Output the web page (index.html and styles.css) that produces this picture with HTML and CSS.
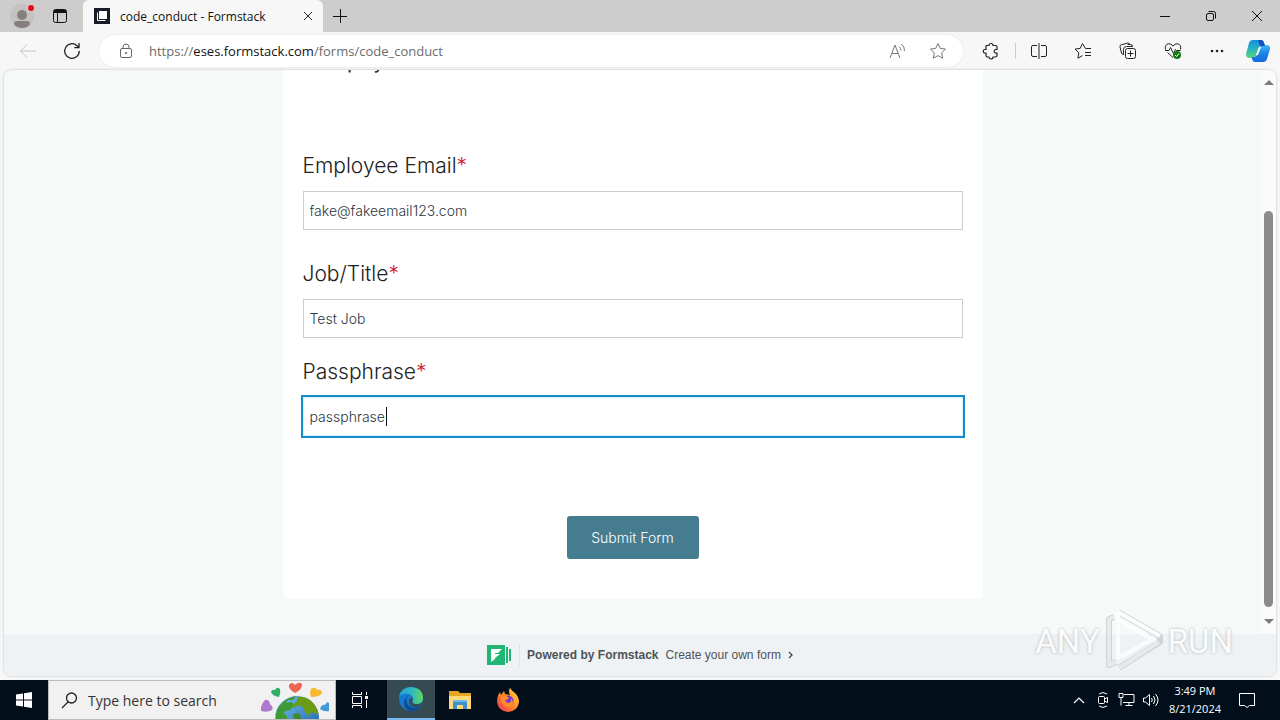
FILE: index.html
```html
<!DOCTYPE html>
<html lang="en">
<head>
<meta charset="utf-8">
<title>code_conduct - Formstack</title>
<link rel="stylesheet" href="styles.css">
</head>
<body>
<div class="desktop">
  <header class="titlebar">
    <div class="title-tools">
      <button class="icon-btn" aria-label="Profile">
        <svg width="26" height="28" viewBox="0 0 26 28"><circle cx="13" cy="14" r="12" fill="#c4c1c0"/><circle cx="13" cy="13" r="5" fill="#85807e"/><path d="M5 22q0-3 3-3h10q3 0 3 3-2 4-8 4t-8-4z" fill="#85807e"/><circle cx="22" cy="6" r="4" fill="#dcc"/><circle cx="22" cy="6" r="3" fill="#e00b1c"/></svg>
      </button>
      <button class="icon-btn" aria-label="Tab actions">
        <svg width="16" height="16" viewBox="0 0 16 16" fill="none" stroke="#111"><rect x="1.5" y="1.5" width="13" height="13" rx="2"/><path d="M2 3.5h12" stroke-width="3"/><path d="M5.5 4v10"/></svg>
      </button>
    </div>
    <div class="tab">
      <svg width="16" height="16" viewBox="0 0 16 16"><path fill="#171c26" d="M0 0h16v16H0z"/><path fill="#fff" d="M5 3h8v8H5z"/><path d="M3.500 4.500v8h8" stroke="#fff" fill="none"/></svg>
      <span class="tab-title">code_conduct - Formstack</span>
      <button class="icon-btn" aria-label="Close tab"><svg width="10" height="10" viewBox="0 0 10 10" stroke="#222" fill="none"><path d="M1 1l8 8M9 1l-8 8"/></svg></button>
    </div>
    <button class="icon-btn new-tab" aria-label="New tab"><svg width="14" height="14" viewBox="0 0 14 14" stroke="#111" fill="none"><path d="M7.500 0v14M0 7.500h14"/></svg></button>
    <div class="window-buttons">
      <button class="icon-btn" aria-label="Minimize"><svg width="12" height="12" viewBox="0 0 12 12" stroke="#111"><path d="M1 6.500h10"/></svg></button>
      <button class="icon-btn" aria-label="Restore"><svg width="12" height="12" viewBox="0 0 12 12" stroke="#111" fill="none"><rect x="1.500" y="3.500" width="7" height="7" rx="1.500"/><path d="M3.500 1.500h5q2 0 2 2v5"/></svg></button>
      <button class="icon-btn" aria-label="Close"><svg width="12" height="12" viewBox="0 0 12 12" stroke="#111"><path d="M1 1l10 10M11 1L1 11"/></svg></button>
    </div>
  </header>

  <nav class="toolbar">
    <div class="nav-tools">
      <button class="icon-btn" aria-label="Back"><svg width="18" height="16" viewBox="0 0 18 16" stroke="#c6c6c6" fill="none"><path d="M1.500 8H17M8 1.500L1.500 8 8 14.500"/></svg></button>
      <button class="icon-btn" aria-label="Refresh"><svg width="18" height="18" viewBox="0 0 18 18" stroke="#222" stroke-width="1.300" fill="none"><path d="M16.300 9A7.300 7.300 0 1 1 14 3.700L16 5.500M16 1v4.700h-4.700"/></svg></button>
    </div>
    <div class="address">
      <svg width="14" height="16" viewBox="0 0 14 16" stroke="#666" fill="none"><rect x="1.500" y="5.500" width="11" height="9" rx="1.500"/><path d="M4 5.500V4q0-3 3-3t3 3v1.500"/><circle cx="7" cy="10" r=".7" fill="#666"/></svg>
      <span class="url">https://<b>eses.formstack.com</b>/forms/code_conduct</span>
      <button class="icon-btn" aria-label="Read aloud"><svg width="18" height="16" viewBox="0 0 18 16" stroke="#777" fill="none"><path d="M1 15L6 2l5 13M3 10.500h6M10 3.500q2 1.500 2 4M12 1q4 2.500 3.500 7"/></svg></button>
      <button class="icon-btn" aria-label="Favorite"><svg width="18" height="18" viewBox="0 0 18 18" stroke="#777" fill="none"><path d="M9 1.500l2.300 4.900 5.200.7-3.800 3.700.9 5.400L9 13.600l-4.600 2.600.9-5.400L1.500 7.100l5.200-.7z" stroke-linejoin="round"/></svg></button>
    </div>
    <div class="browser-tools">
      <button class="icon-btn" aria-label="Extensions"><svg width="18" height="18" viewBox="0 0 18 18" stroke="#222" stroke-width="1.200" fill="none"><path d="M4.500 3.500H7a2 2 0 0 1 4 0h2.500q1.500 0 1.500 1.500v2.500h-1a1.800 1.800 0 0 0 0 3.600h1v2.400q0 1.500-1.500 1.500H11a2 2 0 0 1-4 0H5.500Q4 15 4 13.500v-2.400H3a1.800 1.800 0 0 1 0-3.600h1V4q0-.5.500-.5z" stroke-linejoin="round"/></svg></button>
      <span class="divider"></span>
      <button class="icon-btn" aria-label="Split screen"><svg width="16" height="16" viewBox="0 0 16 16" stroke="#222" fill="none"><path d="M6 2.500H2q-1.500 0-1.500 1.500v8q0 1.500 1.500 1.500h4M10 2.500h4q1.500 0 1.500 1.500v8q0 1.500-1.500 1.500h-4M8 0v16"/></svg></button>
      <button class="icon-btn" aria-label="Favorites list"><svg width="18" height="18" viewBox="0 0 18 18" stroke="#222" fill="none"><path d="M17 6.500h-5.500L8.500 1.500 6.200 6.400 1 7.100l3.800 3.700-.9 5.400 4.600-2.600M11 10.500h6M11 13.500h6" stroke-linejoin="round"/></svg></button>
      <button class="icon-btn" aria-label="Collections"><svg width="18" height="18" viewBox="0 0 18 18" stroke="#222" fill="none"><rect x="6.500" y="6.500" width="10" height="10" rx="2"/><path d="M11.500 8.500v6M8.500 11.500h6M4.500 12.500q-1.500 0-2-1.500l-1.500-6q-.3-1.700 1.200-2.200l6.500-1.700q1.500-.3 2 1.200M4.500 12.500v-5q0-3 3-3h6q0-2-2-2h-3"/></svg></button>
      <button class="icon-btn" aria-label="Browser essentials"><svg width="18" height="18" viewBox="0 0 18 18" stroke="#222" fill="none"><path d="M1.500 7.500q-1-5 3-5.800Q7 1.500 9 4q2-2.500 4.500-2.300 4 .8 3 5.800M3.500 10.500L9 15.500M1 8.500h4l1.500-3 3 6 2-4 1 1h4"/><circle cx="13" cy="13" r="4" fill="#107c10" stroke="none"/><path d="M11 13l1.500 1.500 2.500-3" stroke="#fff"/></svg></button>
      <button class="icon-btn" aria-label="More"><svg width="16" height="4" viewBox="0 0 16 4" fill="#222"><circle cx="3" cy="2" r="1.300"/><circle cx="8" cy="2" r="1.300"/><circle cx="13" cy="2" r="1.300"/></svg></button>
      <button class="icon-btn copilot" aria-label="Copilot"><svg width="24" height="24" viewBox="0 0 24 24"><defs><linearGradient id="ca" x1="0" y1="0" x2="0" y2="1"><stop offset="0" stop-color="#168fe0"/><stop offset=".5" stop-color="#27b5bd"/><stop offset="1" stop-color="#62d875"/></linearGradient><linearGradient id="cb" x1="0" y1="0" x2="0" y2="1"><stop offset="0" stop-color="#45b8f2"/><stop offset=".5" stop-color="#1a83e8"/><stop offset="1" stop-color="#1668dc"/></linearGradient></defs><path d="M7 1h8q2 0 2.700 2L19 7h-3q-2 0-3 2l-3 8q-1 2-3 2H3q-3 0-3-4L3 4q1-3 4-3z" fill="url(#ca)"/><path d="M17 23H9q-2 0-2.700-2L5.500 18H8q2 0 3-2l3-8q1-2 3-2h3.500q4 0 3.500 4l-3 10q-1 3-4 3z" fill="url(#cb)"/><path d="M12 1h3q2 0 2.700 2L19 7h-5z" fill="#1850bd"/><path d="M13 8h2l-3 8h-2z" fill="#fff"/></svg></button>
    </div>
  </nav>

  <div class="page">
    <div class="scroll-area">
      <main class="content">
        <form class="card">
          <div class="clipped"><h2>Employee</h2></div>
          <div class="field field-wide"><label for="email">Employee Email<span class="star">*</span></label><input id="email" type="text" value="fake@fakeemail123.com"></div>
          <div class="field"><label for="job">Job/Title<span class="star">*</span></label><input id="job" type="text" value="Test Job"></div>
          <div class="field"><label for="pass">Passphrase<span class="star">*</span></label><div class="active-wrap"><input class="active" id="pass" type="text" value="passphrase"><span class="caret"></span></div></div>
          <button class="submit" type="button">Submit Form</button>
        </form>
      </main>
      <div class="scrollbar"><span class="arrow up"></span><span class="thumb"></span><span class="arrow down"></span></div>
    </div>
    <footer class="powered">
      <svg width="25" height="20" viewBox="0 0 25 20"><path fill="#21b573" d="M0 0h18v20H0zM19 2h2v16h-2zM22 4h2v12h-2z"/><path fill="#fff" d="M4 4h11l-4 4H8v1h5l-5 4v1l-4 3z"/></svg>
      <a href="#"><strong>Powered by Formstack</strong><span>Create your own form</span><svg width="5" height="8" viewBox="0 0 5 8" fill="none" stroke="#444" stroke-width="1.300"><path d="M1 1l3 3-3 3"/></svg></a>
    </footer>
  </div>

  <footer class="taskbar">
    <button class="task" aria-label="Start"><svg width="16" height="16" viewBox="0 0 16 16" fill="#fff"><path d="M0 2.500l7-1v6H0zM8 1.300L16 0v7.500H8zM0 8.500h7v6l-7-1zM8 8.500h8V16l-8-1.300z"/></svg></button>
    <div class="search">
      <svg width="17" height="17" viewBox="0 0 17 17" fill="none" stroke="#222" stroke-width="1.300"><circle cx="10.500" cy="6" r="5"/><path d="M7 10l-6 6"/></svg>
      <input type="text" aria-label="Search" placeholder="Type here to search">
      <svg width="74" height="38" viewBox="0 0 74 38"><defs><linearGradient id="sea" x1="0" y1="0" x2="1" y2="1"><stop offset="0" stop-color="#79c4ef"/><stop offset="1" stop-color="#1558aa"/></linearGradient></defs><circle cx="36" cy="37" r="22" fill="url(#sea)"/><path d="M22 21q6-5 13-6l-3 4h-5l-2 3 6-1 2 4-4 4-7 2 4 4v3H15q-1-10 7-17z" fill="#3f9a35"/><path d="M36 16q10-2 17 7 5 7 4 11l-6-3-3 4-4-4-2-5-5-2-3 3-2-3 4-4z" fill="#6c9c15"/><path d="M32 33l6-1 3 6h-8z" fill="#3f8a30"/><path d="M34 12q-7-4-6-8 3-4 6 0 4-4 7-1 1 5-7 9z" fill="#ed6550"/><path d="M18 16q-7-1-8-5 1-3 4-2 2-4 5-1 1 4-1 8z" fill="#2fae68"/><path d="M50 16q-2-6 1-9 4-1 5 2 5-1 5 3-2 4-11 4z" fill="#f7b928"/><path d="M0 30q-1-6 4-11 4-1 5 4 4 3 2 6-5 3-11 1z" fill="#ad79cf"/><path d="M59 28q2-5 5-4 2-4 4-2 0 4 0 8-5 1-9-2z" fill="#3e9bd8"/></svg>
    </div>
    <button class="task" aria-label="Task view"><svg width="18" height="16" viewBox="0 0 18 16" fill="none" stroke="#fff"><path d="M1.500 0v2.500h9V0M1.500 16v-2.500h9V16M1.500 4.500h9v7h-9zM15.500 0v3M15.500 8v8"/><path d="M14 4h3v3h-3z" fill="#fff" stroke="none"/></svg></button>
    <button class="task selected" aria-label="Edge"><svg width="26" height="26" viewBox="0 0 26 26"><defs><linearGradient id="ea" x1="0" y1="0" x2="1" y2="0"><stop offset="0" stop-color="#269fdd"/><stop offset=".5" stop-color="#2cb8c5"/><stop offset="1" stop-color="#62d65c"/></linearGradient></defs><circle cx="13" cy="13" r="12" fill="#1678ca"/><path d="M1 11Q3 1 13 1q12 1 12 11 0 6-7 6-6-1-3-4 1-4-4-6Q4 7 1 11z" fill="url(#ea)"/><path d="M11 9q-5 4-1 10 5 5 13 1-4 6-11 5-6-2-6-8 0-5 5-8z" fill="#124a94"/><path d="M15 14q-2 3 2 4 4 1 7-2-1 5-6 5-6 0-7-5 0-3 3-4z" fill="#354a51"/></svg></button>
    <button class="task" aria-label="File Explorer"><svg width="22" height="20" viewBox="0 0 22 20"><path fill="#e8a521" d="M0 1h9l2 2h11v16H0z"/><path fill="#ffd978" d="M0 6h22v13H0z"/><path fill="#3f91cc" d="M4 10h14v9h-4v-4H8v4H4z"/><path fill="#69b9e8" d="M4 10h14v2H4z"/></svg></button>
    <button class="task" aria-label="Firefox"><svg width="24" height="24" viewBox="0 0 24 24"><defs><linearGradient id="fa" x1="1" y1="0" x2="0" y2="1"><stop offset="0" stop-color="#ffe13d"/><stop offset=".5" stop-color="#ff8a25"/><stop offset="1" stop-color="#ef245f"/></linearGradient></defs><path d="M14 0q2 3 5 5 4 4 4 9-1 9-11 10Q2 23 1 14q0-6 3-10l1 3 3-4 1 3 5 1q-2-4 0-7z" fill="url(#fa)"/><circle cx="12" cy="13" r="5.500" fill="#7838c7"/><path d="M5 8q4-2 8 2-1 2-4 2 1 3 4 3 3-1 2-5 4 5 0 8-6 3-9-3-2-3-1-7z" fill="#ff8b29"/></svg></button>
    <div class="tray">
      <svg width="24" height="8" viewBox="0 0 12 8" fill="none" stroke="#fff" stroke-width="1.200"><path d="M1 7l5-5 5 5"/></svg>
      <svg width="24" height="18" viewBox="0 0 12 18" fill="none" stroke="#fff"><rect x="1.500" y="5.500" width="6" height="7" rx="1"/><path d="M7.500 8l3-1.500v5L7.500 10M2 3q4-3 8 0M2 15q4 3 8 0"/></svg>
      <svg width="24" height="16" viewBox="0 0 17 16" fill="none" stroke="#fff"><path d="M5.500 2.500h10v8h-11M10.500 10.500v3M7 13.500h7M.5 1.500h4v4h-4zM2.500 5.500v8"/></svg>
      <svg width="24" height="14" viewBox="0 0 17 14" fill="none" stroke="#fff"><path d="M1 5h2l4-3.500v11L3 9H1zM9 5q1.500 2 0 4M11 3q3 4 0 8M13 1q5 6 0 12"/></svg>
      <time class="clock"><span>3:49 PM</span><span>8/21/2024</span></time>
      <svg width="24" height="17" viewBox="0 0 16 17" fill="none" stroke="#fff"><path d="M.5 1.500h15v12h-5l-2.500 2-2.500-2h-5z"/></svg>
    </div>
  </footer>

  <div class="watermark"><span>ANY</span><svg width="58" height="66" viewBox="0 0 58 66" fill="none" stroke-linejoin="round"><path d="M9 9l-5 2v46l7-3M13 4l42 24v6L14 60" stroke="#c3c7ca" stroke-width="6"/><path d="M9 9l-5 2v46l7-3M14 60l40-26" stroke="#e4e7ea" stroke-width="4"/><path d="M50 33L13 12V4l42 24M13 4v46l33-18" stroke="#fff" stroke-width="4"/></svg><span>RUN</span></div>
</div>
</body>
</html>
```
FILE: styles.css
```css
* { box-sizing: border-box; }
body { margin: 0; font-family: "Open Sans", "Noto Sans", sans-serif; font-size: 12px; color: #111; }
button, input { font: inherit; margin: 0; }
button { border: 0; padding: 0; background: none; }
svg { display: block; flex: none; }
.desktop { position: relative; display: flex; flex-direction: column; height: 100vh; overflow: hidden; background: #f7f7f7; }
.icon-btn { display: grid; place-items: center; flex: none; color: #222; }

.titlebar { display: flex; align-items: stretch; height: 32px; background: #cdcdcd; }
.title-tools { display: flex; align-items: center; gap: 17px; width: 83px; padding-left: 9px; }
.tab { display: flex; align-items: center; gap: 10px; width: 240px; padding: 0 10px 0 11px; background: #f7f7f7; border-radius: 6px 6px 0 0; }
.tab-title { flex: 1; white-space: nowrap; }
.new-tab { margin-left: 10px; }
.window-buttons { display: flex; gap: 34px; margin-left: auto; padding-right: 17px; }

.toolbar { display: flex; align-items: center; height: 38px; background: #f7f7f7; }
.nav-tools { display: flex; gap: 26px; width: 99px; padding-left: 19px; }
.address { display: flex; align-items: center; flex: 1; height: 32px; gap: 22px; padding: 0 16px 0 20px; border-radius: 16px; background: #fff; box-shadow: 0 0 2px #ddd; }
.url { flex: 1; font-size: 13px; margin-left: -6px; color: #6c6c6c; }
.url b { font-weight: 400; color: #111; }
.browser-tools { display: flex; align-items: center; gap: 27px; padding: 0 10px 0 19px; }
.divider { width: 1px; height: 16px; background: #ccc; margin: 0 -12px; }
.copilot { margin-left: -6px; }

.page { display: flex; flex-direction: column; flex: 1; min-height: 0; margin: 0 4px 4px; border-radius: 8px; overflow: hidden; background: #f5f9f8; box-shadow: 0 0 2px 1px #dcdcdc; }
.scroll-area { display: flex; flex: 1; min-height: 0; }
.content { flex: 1; overflow: hidden; }
.card { display: flex; flex-direction: column; max-width: 700px; margin: 0 auto; padding: 0 20px 40px; background: #fff; border-radius: 0 0 6px 6px; font-family: Inter, sans-serif; font-weight: 300; }
.clipped { display: flex; align-items: flex-end; height: 4px; margin-bottom: 77px; padding-left: 18px; overflow: hidden; }
.clipped h2 { margin: 0; font-size: 18px; line-height: 22px; font-weight: 500; color: #333; }
.field { display: flex; flex-direction: column; gap: 10px; margin-bottom: 19px; }
.field-wide { margin-bottom: 29px; }
.field label { font-size: 21px; line-height: 30px; color: #222; }
.star { color: #cf2030; }
.field input { width: 100%; height: 39px; padding: 0 6px; border: 1px solid #ccc; border-radius: 0; font-size: 14px; color: #2b3640; background: #fff; outline: none; }
.active-wrap { position: relative; }
.field .active { outline: 2px solid #148ccb; border-color: #d6effc; }
.caret { position: absolute; left: 83px; top: 10px; width: 1px; height: 19px; background: #111; }
.submit { align-self: center; min-width: 132px; height: 43px; margin-top: 61px; border-radius: 3px; background: #467c8f; color: #fff; font-size: 14px; }
.scrollbar { display: flex; flex-direction: column; align-items: center; width: 15px; padding: 10px 0; background: #fbfbfb; }
.arrow { border: 5px solid transparent; }
.up { border-top: 0; border-bottom-color: #7d7d7d; }
.down { border-bottom: 0; border-top-color: #7d7d7d; }
.thumb { flex: 1; width: 9px; margin: 126px 0 12px; border-radius: 5px; background: #8b8b8b; }
.powered { display: flex; align-items: center; justify-content: center; gap: 7px; height: 42px; background: #eef2f5; font-family: "Liberation Sans", sans-serif; }
.powered a { display: flex; align-items: center; gap: 7px; height: 22px; padding-left: 7px; border-left: 1px solid #dfe2e5; color: #4f5357; text-decoration: none; }

.taskbar { display: flex; height: 40px; background: #020f1b; }
.task { display: grid; place-items: center; width: 48px; }
.selected { margin: 0 1px 0 3px; background: #354a51; border-bottom: 2px solid #76b9ed; }
.search { display: flex; align-items: center; width: 288px; padding-left: 12px; border: 1px solid #bbb; background: #f1f1f1; }
.search input { flex: 1; min-width: 0; border: 0; padding: 0 0 0 10px; background: none; font-size: 14px; }
.search input::placeholder { color: #333; opacity: 1; }
.tray { display: flex; align-items: center; margin-left: auto; padding-right: 21px; color: #fff; }
.clock { display: flex; flex-direction: column; align-items: center; margin: 0 14px 0 6px; line-height: 18px; font-size: 11px; }

.watermark { position: absolute; right: 47px; bottom: 46px; display: flex; align-items: center; gap: 5px; font: 33px "Roboto", sans-serif; color: #fff; text-shadow: 0 0 3px #999; opacity: 0.7; }
```
